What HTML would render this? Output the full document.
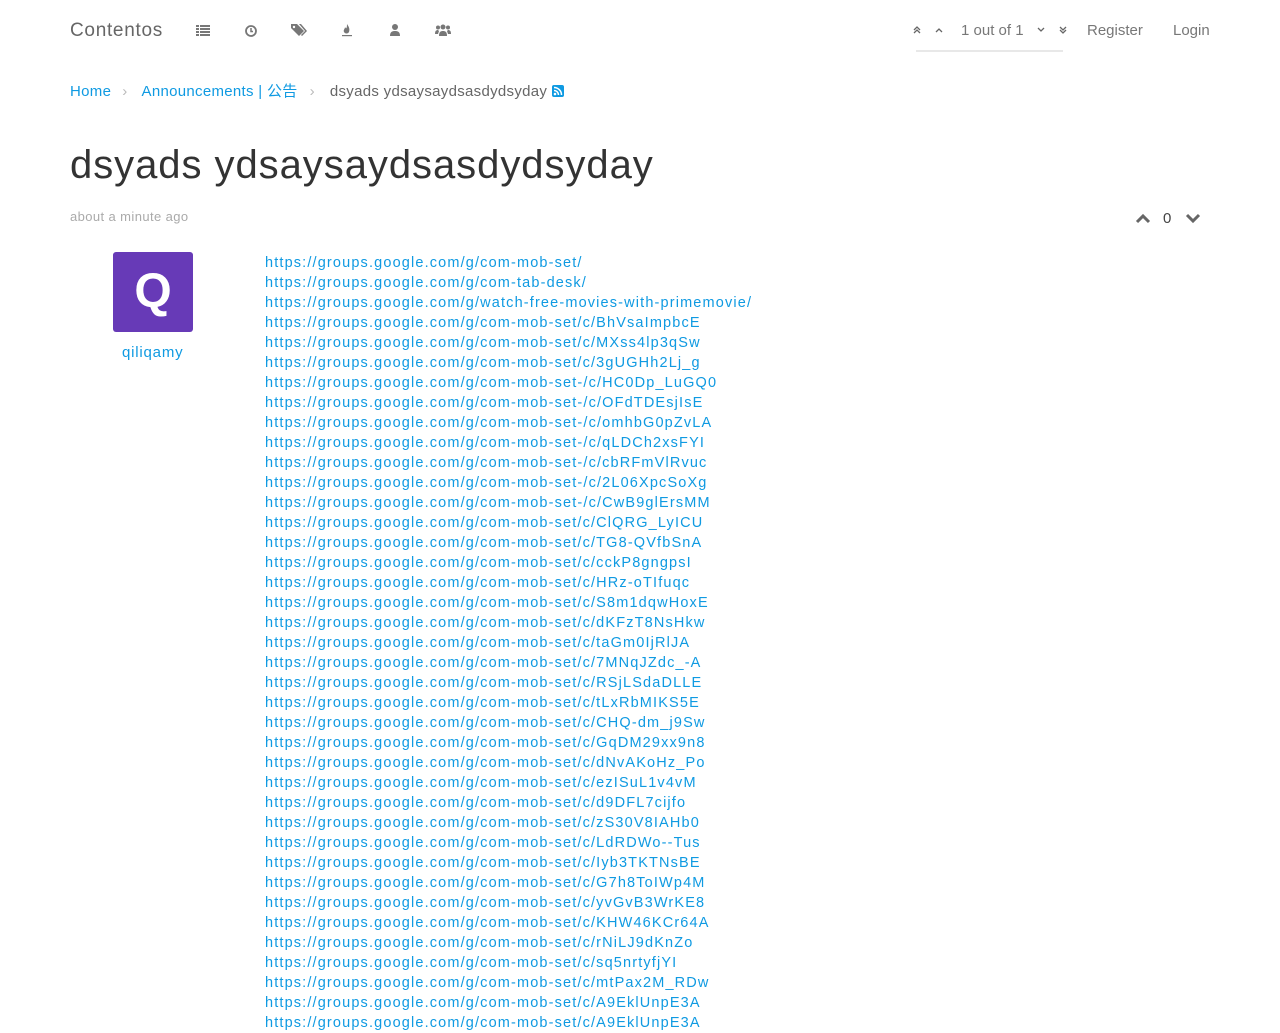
<!DOCTYPE html>
<html><head><meta charset="utf-8"><style>
body{margin:0;background:#fff;font-family:"Liberation Sans","Noto Sans CJK SC",sans-serif;color:#555;width:1280px;height:1024px;overflow:hidden;position:relative}
.a{position:absolute;white-space:nowrap}
a{color:#0f9ae2;text-decoration:none}
.links{position:absolute;left:265px;top:253px;font-size:14.5px;line-height:20px;letter-spacing:1.15px}
.links div{height:20px}
.ic{position:absolute;top:23px}
</style></head><body>
<div class="a" style="left:70px;top:20px;font-size:19px;color:#666;letter-spacing:0.7px">Contentos</div>
<svg class="ic" style="left:196px" width="14" height="14" viewBox="0 0 14 14" fill="#777"><rect x="0" y="2" width="3" height="2"/><rect x="4" y="2" width="10" height="2"/><rect x="0" y="5" width="3" height="2"/><rect x="4" y="5" width="10" height="2"/><rect x="0" y="8" width="3" height="2"/><rect x="4" y="8" width="10" height="2"/><rect x="0" y="11" width="3" height="2"/><rect x="4" y="11" width="10" height="2"/></svg>
<svg class="ic" style="left:244px" width="14" height="14" viewBox="0 0 14 14"><circle cx="7" cy="8" r="5" fill="none" stroke="#777" stroke-width="1.8"/><path d="M7 5v3.5H9" stroke="#777" stroke-width="1.5" fill="none"/></svg>
<svg class="ic" style="left:291px" width="16" height="14" viewBox="0 0 16 14" fill="#777"><path d="M0 1h6l7 7-5 5-8-8z"/><path d="M8 1h2l6 7-5 5-1-1 4-4z"/><circle cx="3" cy="4" r="1.2" fill="#fff"/></svg>
<svg class="ic" style="left:341px" width="12" height="14" viewBox="0 0 12 14" fill="#777"><path d="M6 1C8 4 9 6 8 9 7 11 4 11 3 9 2 7 4 6 4 4 5 6 6 6 6 1z"/><rect x="1" y="12" width="10" height="1.2"/></svg>
<svg class="ic" style="left:389px" width="12" height="14" viewBox="0 0 12 14" fill="#777"><circle cx="6" cy="4" r="3"/><path d="M1 13c0-4 2-5 5-5s5 1 5 5z"/></svg>
<svg class="ic" style="left:435px" width="16" height="14" viewBox="0 0 16 14" fill="#777"><circle cx="8" cy="4" r="2.5"/><circle cx="3" cy="4.5" r="2"/><circle cx="13" cy="4.5" r="2"/><path d="M4 13c0-4 1.5-5 4-5s4 1 4 5z"/><path d="M0 11c0-3 1-4 3-4l1 1-1 3z"/><path d="M16 11c0-3-1-4-3-4l-1 1 1 3z"/></svg>
<svg class="a" style="left:912px;top:25px" width="10" height="10" viewBox="0 0 10 10"><path d="M2 5l3-3 3 3M2 8l3-3 3 3" stroke="#666" stroke-width="1.3" fill="none"/></svg>
<svg class="a" style="left:934px;top:25px" width="10" height="10" viewBox="0 0 10 10"><path d="M2 7l3-3 3 3" stroke="#666" stroke-width="1.3" fill="none"/></svg>
<div class="a" style="left:961px;top:22px;font-size:15px;color:#777">1 out of 1</div>
<svg class="a" style="left:1036px;top:25px" width="10" height="10" viewBox="0 0 10 10"><path d="M2 3l3 3 3-3" stroke="#666" stroke-width="1.3" fill="none"/></svg>
<svg class="a" style="left:1058px;top:25px" width="10" height="10" viewBox="0 0 10 10"><path d="M2 2l3 3 3-3M2 5l3 3 3-3" stroke="#666" stroke-width="1.3" fill="none"/></svg>
<div class="a" style="left:916px;top:50px;width:147px;height:2px;background:#e8e8e8"></div>
<div class="a" style="left:1087px;top:22px;font-size:15px;color:#777">Register</div>
<div class="a" style="left:1173px;top:22px;font-size:15px;color:#777">Login</div>
<div class="a" style="left:70px;top:80px;font-size:15px;letter-spacing:0.3px"><a>Home</a><span style="color:#bbb;margin:0 14px 0 11px">&rsaquo;</span><a>Announcements | 公告</a><span style="color:#bbb;margin:0 15px 0 12px">&rsaquo;</span><span style="color:#666">dsyads ydsaysaydsasdydsyday</span> <svg width="12" height="12" viewBox="0 0 12 12" style="vertical-align:-1px"><rect width="12" height="12" rx="2" fill="#0f9ae2"/><circle cx="3" cy="9" r="1.3" fill="#fff"/><path d="M2 5.5a4.5 4.5 0 014.5 4.5M2 2.5a7.5 7.5 0 017.5 7.5" stroke="#fff" stroke-width="1.5" fill="none"/></svg></div>
<div class="a" style="left:70px;top:143px;font-size:40px;color:#333;letter-spacing:0.95px">dsyads ydsaysaydsasdydsyday</div>
<div class="a" style="left:70px;top:209px;font-size:13px;color:#aaa;letter-spacing:0.4px">about a minute ago</div>
<svg class="a" style="left:1135px;top:212px" width="16" height="12" viewBox="0 0 16 12"><path d="M2 10l6-6 6 6" stroke="#666" stroke-width="3" fill="none"/></svg>
<div class="a" style="left:1163px;top:210px;font-size:15px;color:#444">0</div>
<svg class="a" style="left:1185px;top:213px" width="16" height="12" viewBox="0 0 16 12"><path d="M2 2l6 6 6-6" stroke="#666" stroke-width="3" fill="none"/></svg>
<div class="a" style="left:113px;top:252px;width:80px;height:80px;background:#673ab7;border-radius:3px;color:#fff;font-size:48px;font-weight:bold;text-align:center;line-height:80px">Q</div>
<div class="a" style="left:122px;top:344px;font-size:15px;letter-spacing:0.8px"><a>qiliqamy</a></div>
<div class="links">
<div><a>https://groups.google.com/g/com-mob-set/</a></div>
<div><a>https://groups.google.com/g/com-tab-desk/</a></div>
<div><a>https://groups.google.com/g/watch-free-movies-with-primemovie/</a></div>
<div><a>https://groups.google.com/g/com-mob-set/c/BhVsaImpbcE</a></div>
<div><a>https://groups.google.com/g/com-mob-set/c/MXss4lp3qSw</a></div>
<div><a>https://groups.google.com/g/com-mob-set/c/3gUGHh2Lj_g</a></div>
<div><a>https://groups.google.com/g/com-mob-set-/c/HC0Dp_LuGQ0</a></div>
<div><a>https://groups.google.com/g/com-mob-set-/c/OFdTDEsjIsE</a></div>
<div><a>https://groups.google.com/g/com-mob-set-/c/omhbG0pZvLA</a></div>
<div><a>https://groups.google.com/g/com-mob-set-/c/qLDCh2xsFYI</a></div>
<div><a>https://groups.google.com/g/com-mob-set-/c/cbRFmVlRvuc</a></div>
<div><a>https://groups.google.com/g/com-mob-set-/c/2L06XpcSoXg</a></div>
<div><a>https://groups.google.com/g/com-mob-set-/c/CwB9glErsMM</a></div>
<div><a>https://groups.google.com/g/com-mob-set/c/ClQRG_LyICU</a></div>
<div><a>https://groups.google.com/g/com-mob-set/c/TG8-QVfbSnA</a></div>
<div><a>https://groups.google.com/g/com-mob-set/c/cckP8gngpsI</a></div>
<div><a>https://groups.google.com/g/com-mob-set/c/HRz-oTIfuqc</a></div>
<div><a>https://groups.google.com/g/com-mob-set/c/S8m1dqwHoxE</a></div>
<div><a>https://groups.google.com/g/com-mob-set/c/dKFzT8NsHkw</a></div>
<div><a>https://groups.google.com/g/com-mob-set/c/taGm0IjRlJA</a></div>
<div><a>https://groups.google.com/g/com-mob-set/c/7MNqJZdc_-A</a></div>
<div><a>https://groups.google.com/g/com-mob-set/c/RSjLSdaDLLE</a></div>
<div><a>https://groups.google.com/g/com-mob-set/c/tLxRbMIKS5E</a></div>
<div><a>https://groups.google.com/g/com-mob-set/c/CHQ-dm_j9Sw</a></div>
<div><a>https://groups.google.com/g/com-mob-set/c/GqDM29xx9n8</a></div>
<div><a>https://groups.google.com/g/com-mob-set/c/dNvAKoHz_Po</a></div>
<div><a>https://groups.google.com/g/com-mob-set/c/ezISuL1v4vM</a></div>
<div><a>https://groups.google.com/g/com-mob-set/c/d9DFL7cijfo</a></div>
<div><a>https://groups.google.com/g/com-mob-set/c/zS30V8IAHb0</a></div>
<div><a>https://groups.google.com/g/com-mob-set/c/LdRDWo--Tus</a></div>
<div><a>https://groups.google.com/g/com-mob-set/c/Iyb3TKTNsBE</a></div>
<div><a>https://groups.google.com/g/com-mob-set/c/G7h8ToIWp4M</a></div>
<div><a>https://groups.google.com/g/com-mob-set/c/yvGvB3WrKE8</a></div>
<div><a>https://groups.google.com/g/com-mob-set/c/KHW46KCr64A</a></div>
<div><a>https://groups.google.com/g/com-mob-set/c/rNiLJ9dKnZo</a></div>
<div><a>https://groups.google.com/g/com-mob-set/c/sq5nrtyfjYI</a></div>
<div><a>https://groups.google.com/g/com-mob-set/c/mtPax2M_RDw</a></div>
<div><a>https://groups.google.com/g/com-mob-set/c/A9EklUnpE3A</a></div>
<div><a>https://groups.google.com/g/com-mob-set/c/A9EklUnpE3A</a></div>
</div>
</body></html>
